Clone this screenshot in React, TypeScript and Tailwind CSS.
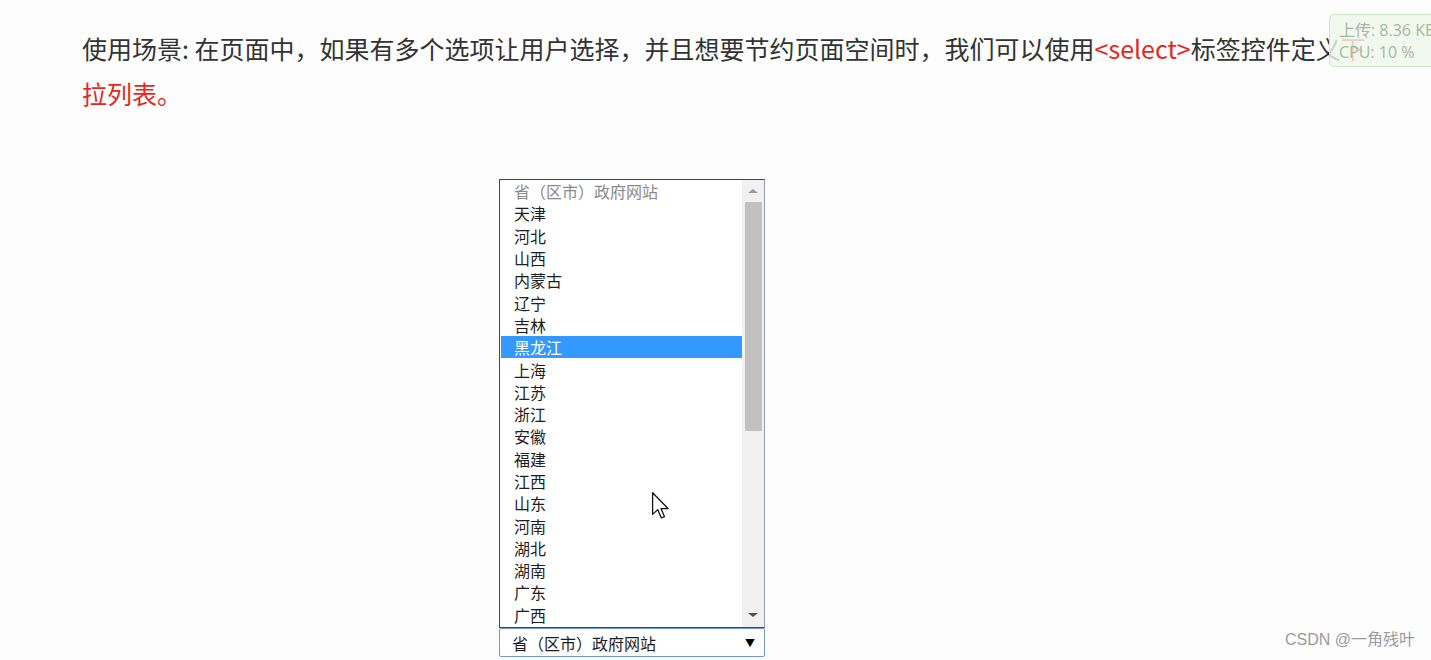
import { ReactNode } from "react";

const provinces = [
  "天津",
  "河北",
  "山西",
  "内蒙古",
  "辽宁",
  "吉林",
  "黑龙江",
  "上海",
  "江苏",
  "浙江",
  "安徽",
  "福建",
  "江西",
  "山东",
  "河南",
  "湖北",
  "湖南",
  "广东",
  "广西",
];

const Option = ({
  children,
  active,
  muted,
}: {
  children: ReactNode;
  active?: boolean;
  muted?: boolean;
}) => {
  return (
    <div
      className={
        "h-[22.3px] flex items-center pl-[13px] text-[16px] leading-none " +
        (active
          ? "bg-[#3399ff] text-white"
          : muted
          ? "text-[#8a8a8a]"
          : "text-[#1e1e1e]")
      }
    >
      {children}
    </div>
  );
};

const Cursor = () => (
  <svg width="20" height="28" viewBox="0 0 13 20" className="absolute left-[651px] top-[492px]">
    <path
      d="M0.5 0.5 L0.5 16 L4.2 12.6 L6.8 18.6 L9 17.6 L6.5 11.8 L11.5 11.8 Z"
      fill="#fff"
      stroke="#111"
      strokeWidth="0.9"
      strokeLinejoin="round"
    />
  </svg>
);

export default function App() {
  return (
    <div className="relative min-h-screen bg-[#fdfdfd] font-['Noto_Sans_CJK_SC','Noto_Sans',sans-serif] overflow-hidden">
      <p className="pl-[82px] pt-[26px] text-[25px] leading-[45px] text-[#333] whitespace-nowrap">
        使用场景: 在页面中，如果有多个选项让用户选择，并且想要节约页面空间时，我们可以使用
        <span className="text-[#e5281c]">&lt;select&gt;</span>标签控件定义
        <span className="text-[#e5281c]">下</span>
        <br />
        <span className="text-[#e5281c]">拉列表。</span>
      </p>

      <div className="ml-[499px] mt-[63px] w-[266px]">
        <div className="h-[449px] flex border border-[#3b4660] border-r-[#8f9dba] bg-white">
          <div className="flex-1 flex flex-col pl-px">
            <Option muted>省（区市）政府网站</Option>
            {provinces.map((p) => (
              <Option key={p} active={p === "黑龙江"}>
                {p}
              </Option>
            ))}
          </div>
          <div className="w-[22px] bg-[#f1f1f1] flex flex-col items-center">
            <div className="h-[22px] flex items-center justify-center">
              <div className="w-0 h-0 border-x-[5px] border-x-transparent border-b-[4px] border-b-[#9a9a9a]" />
            </div>
            <div className="w-[17px] h-[229px] bg-[#c1c1c1]" />
            <div className="flex-1" />
            <div className="h-[24px] flex items-center justify-center">
              <div className="w-0 h-0 border-x-[5px] border-x-transparent border-t-[4px] border-t-[#505050]" />
            </div>
          </div>
        </div>
        <div className="h-[29px] flex items-center justify-between border border-[#7297cc] rounded-[2px] bg-white pl-[12px] pr-[9px] text-[16px] text-[#1e1e1e]">
          <span>省（区市）政府网站</span>
          <span className="text-[10px] text-black">▼</span>
        </div>
      </div>

      <div className="absolute left-[1329px] top-[14px] w-[120px] h-[53px] rounded-[5px] border border-[#c9e6c0] bg-[#eef8ea]/80 pl-[9px] pt-[4px] text-[16px] leading-[22px] text-[#a5b8a3] font-['Open_Sans','Noto_Sans_CJK_SC',sans-serif]">
        <div>上传: 8.36 KB</div>
        <div>CPU: 10 %</div>
      </div>

      <Cursor />

      <div className="absolute right-[16px] bottom-[8px] text-[16px] text-[#9b9b9b] font-['Liberation_Sans','Noto_Sans_CJK_SC',sans-serif]">
        CSDN @一角残叶
      </div>
    </div>
  );
}
